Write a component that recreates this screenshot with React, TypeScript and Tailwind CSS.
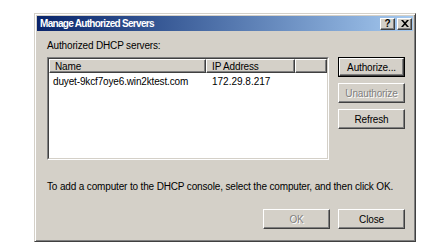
import React from "react";

const raised =
  "border border-t-white border-l-white border-r-[#404040] border-b-[#404040] shadow-[inset_-1px_-1px_0_#808080]";

function Button({
  label,
  disabled,
  isDefault,
}: {
  label: string;
  disabled?: boolean;
  isDefault?: boolean;
}) {
  const face = (
    <div
      className={`flex h-full w-full items-center justify-center bg-[#d4d0c8] ${raised} ${
        disabled ? "text-[#808080] [text-shadow:1px_1px_0_#fff]" : "text-black"
      }`}
    >
      {label}
    </div>
  );
  if (isDefault) {
    return <div className="h-[20px] w-[67px] border border-black">{face}</div>;
  }
  return <div className="h-[20px] w-[67px]">{face}</div>;
}

function HeaderCell({ label, width }: { label: string; width?: string }) {
  return (
    <div
      className={`flex h-[14px] items-center bg-[#d4d0c8] pl-[5px] ${raised} ${width ?? "flex-1"}`}
    >
      {label}
    </div>
  );
}

export default function App() {
  return (
    <div
      className="h-[247px] w-[429px] bg-white pl-[34px] pt-[13px] text-[10px] tracking-[-0.15px] text-black"
      style={{ fontFamily: '"Liberation Sans", Arial, sans-serif' }}
    >
      {/* window */}
      <div className="flex h-[229px] w-[382px] flex-col border border-t-[#d4d0c8] border-l-[#d4d0c8] border-r-[#404040] border-b-[#404040] bg-[#d4d0c8] p-[2px] shadow-[inset_1px_1px_0_#fff,inset_-1px_-1px_0_#808080]">
        {/* title bar */}
        <div className="flex h-[15px] items-center bg-gradient-to-r from-[#0a246a] to-[#a6caf0] pl-[3px] pr-[1px]">
          <span className="flex-1 text-[10px] font-bold tracking-[-0.7px] text-white">
            Manage Authorized Servers
          </span>
          <div className="flex gap-[2px]">
            <div className={`flex h-[12px] w-[15px] items-center justify-center bg-[#d4d0c8] text-[10px] font-bold leading-none tracking-normal ${raised}`}>
              ?
            </div>
            <div className={`flex h-[12px] w-[15px] items-center justify-center bg-[#d4d0c8] ${raised}`}>
              <svg width="8" height="7" viewBox="0 0 8 7">
                <path d="M0 0h2l2 2.2L6 0h2L5 3.5 8 7H6L4 4.8 2 7H0l3-3.5z" fill="#000" />
              </svg>
            </div>
          </div>
        </div>

        {/* body */}
        <div className="flex flex-col pl-[10px] pr-[8px] pt-[9px]">
          <div className="h-[12px] leading-[12px]">Authorized DHCP servers:</div>

          <div className="mt-[5px] flex gap-[9px]">
            {/* list view */}
            <div className="h-[103px] w-[282px] border border-t-[#808080] border-l-[#808080] border-r-white border-b-white">
              <div className="h-full w-full border border-t-[#404040] border-l-[#404040] border-r-[#d4d0c8] border-b-[#d4d0c8] bg-white">
                <div className="flex">
                  <HeaderCell label="Name" width="w-[157px]" />
                  <HeaderCell label="IP Address" width="w-[89px]" />
                  <HeaderCell label="" />
                </div>
                <div className="mt-[3px] flex h-[12px] items-center leading-[12px]">
                  <span className="w-[157px] pl-[4px]">duyet-9kcf7oye6.win2ktest.com</span>
                  <span className="pl-[6px] tracking-normal">172.29.8.217</span>
                </div>
              </div>
            </div>

            {/* side buttons */}
            <div className="flex flex-col gap-[6px]">
              <Button label="Authorize..." isDefault />
              <Button label="Unauthorize" disabled />
              <Button label="Refresh" />
            </div>
          </div>

          <div className="mt-[21px] h-[12px] leading-[12px]">
            To add a computer to the DHCP console, select the computer, and then click OK.
          </div>

          <div className="mt-[16px] flex justify-end gap-[8px]">
            <Button label="OK" disabled />
            <Button label="Close" />
          </div>
        </div>
      </div>
    </div>
  );
}
